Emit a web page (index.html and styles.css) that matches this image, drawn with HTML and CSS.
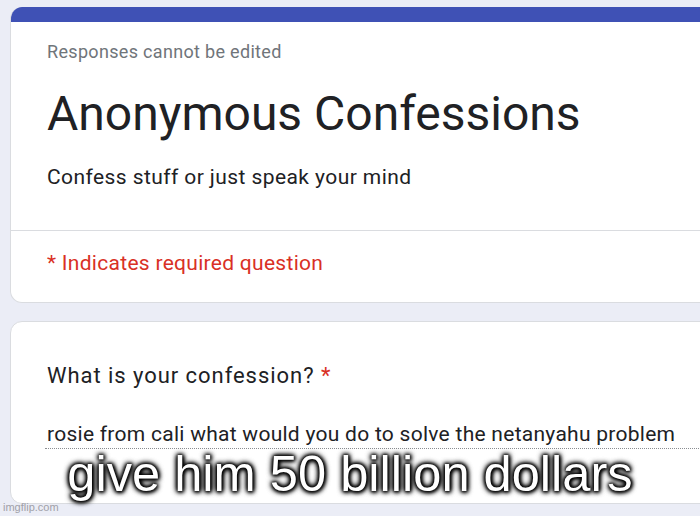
FILE: index.html
```html
<!DOCTYPE html>
<html>
<head>
<meta charset="utf-8">
<link rel="stylesheet" href="styles.css">
</head>
<body>
<div class="page">
  <div class="card head-card">
    <div class="topbar"></div>
    <div class="head">
      <div class="note">Responses cannot be edited</div>
      <h1 class="title">Anonymous Confessions</h1>
      <div class="desc">Confess stuff or just speak your mind</div>
    </div>
    <div class="req">* Indicates required question</div>
  </div>
  <div class="card q-card">
    <div class="question">What is your confession? <span class="star">*</span></div>
    <div class="answer">rosie from cali what would you do to solve the netanyahu problem</div>
  </div>
</div>
<div class="meme">give him 50 billion dollars</div>
<div class="wm">imgflip.com</div>
</body>
</html>
```
FILE: styles.css
```css
html, body {
  margin: 0;
  padding: 0;
  width: 700px;
  height: 516px;
  overflow: hidden;
  background: #ebedf6;
  font-family: Roboto, "Liberation Sans", sans-serif;
}
.page {
  padding: 7px 0 0 10px;
  display: flex;
  flex-direction: column;
  gap: 18px;
}
.card {
  background: #fff;
  border: 1px solid #dadce0;
  border-radius: 12px;
  margin-right: -30px;
  overflow: hidden;
}
.head-card {
  border-top: none;
}
.topbar {
  height: 15px;
  background: #3f51b5;
}
.head {
  padding: 18px 37px 39px 36px;
  border-bottom: 1px solid #dadce0;
}
.note {
  font-size: 18px;
  line-height: 24px;
  color: #70757a;
  letter-spacing: 0.32px;
}
.title {
  margin: 22px 0 0 0;
  font-weight: 400;
  font-size: 48px;
  line-height: 56px;
  color: #202124;
}
.desc {
  margin-top: 21px;
  font-size: 21px;
  line-height: 28px;
  letter-spacing: 0.42px;
  color: #202124;
}
.req {
  padding: 18px 36px 25px;
  font-size: 21px;
  line-height: 28px;
  letter-spacing: 0.29px;
  color: #d93025;
}
.q-card {
  padding: 40px 0 0 36px;
  height: 141px;
}
.question {
  font-size: 22px;
  line-height: 28px;
  letter-spacing: 0.95px;
  color: #202124;
}
.star {
  color: #d93025;
}
.answer {
  margin-top: 30px;
  margin-left: -2px;
  padding-left: 2px;
  font-size: 21px;
  line-height: 28px;
  letter-spacing: 0.27px;
  color: #202124;
  border-bottom: 1px dotted #8a8d91;
}
.meme {
  position: absolute;
  left: 0;
  right: 0;
  top: 444px;
  text-align: center;
  font-family: "Liberation Sans", Arial, sans-serif;
  font-size: 50.6px;
  line-height: 60px;
  color: #fff;
  text-shadow: 0 0 3px #000, 0 0 4px #000, 0 0 6px #000, 0 0 6px #000, 1px 1px 4px #000;
}
.wm {
  position: absolute;
  left: 3px;
  top: 500px;
  font-family: "Liberation Sans", Arial, sans-serif;
  font-size: 11px;
  line-height: 14px;
  color: #a0a0a8;
}
```
